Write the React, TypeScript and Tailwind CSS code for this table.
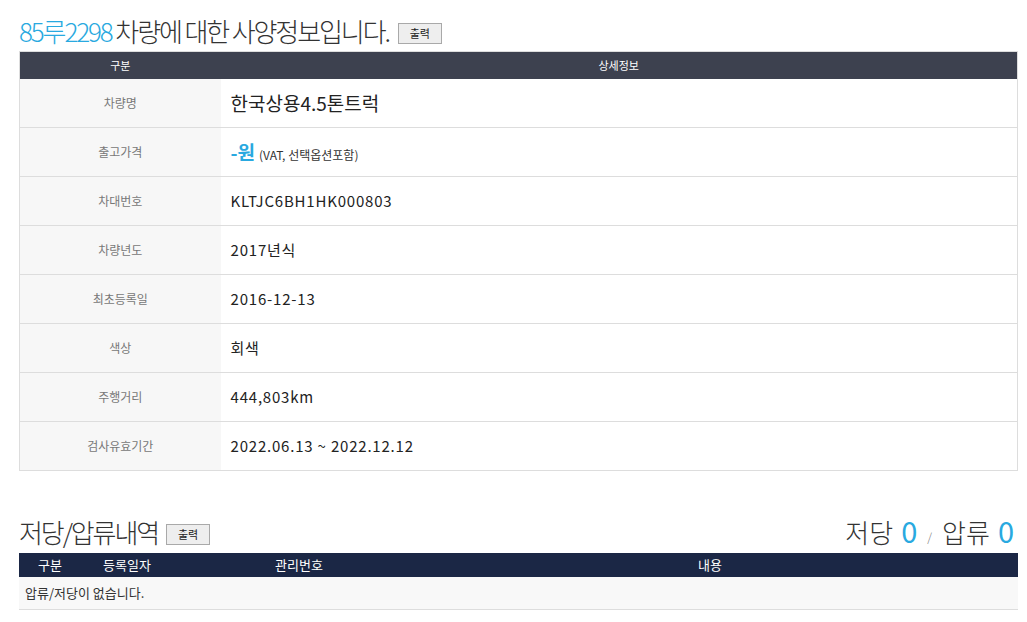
const rows: { label: string; value: React.ReactNode }[] = [
  {
    label: "차량명",
    value: <span className="text-[19px] tracking-normal text-[#222]">한국상용4.5톤트럭</span>,
  },
  {
    label: "출고가격",
    value: (
      <span className="flex items-baseline gap-1 tracking-normal">
        <span className="text-[19px] font-bold text-[#29a9e0]">-원</span>
        <span className="text-[12px] text-[#333]">(VAT, 선택옵션포함)</span>
      </span>
    ),
  },
  { label: "차대번호", value: "KLTJC6BH1HK000803" },
  { label: "차량년도", value: "2017년식" },
  { label: "최초등록일", value: "2016-12-13" },
  { label: "색상", value: "회색" },
  { label: "주행거리", value: "444,803km" },
  { label: "검사유효기간", value: "2022.06.13 ~ 2022.12.12" },
];

function PrintButton() {
  return (
    <button className="h-[21px] w-[44px] border border-[#a9a9a9] bg-[#eeeeee] text-[11px] text-[#222] leading-none">
      출력
    </button>
  );
}

export default function App() {
  return (
    <div
      className="w-[1027px] h-[622px] bg-white overflow-hidden"
      style={{ fontFamily: '"Noto Sans CJK KR", "Noto Sans", sans-serif' }}
    >
      {/* SPEC INFO */}
      <div className="ml-[19px] w-[999px]">
        <div className="flex items-end gap-[9px] h-[51px] pb-[7px]">
          <h2 className="text-[26px] font-light tracking-[-2.1px] leading-none text-[#333]">
            <span className="text-[#29a9e0]">85루2298</span> 차량에 대한 사양정보입니다.
          </h2>
          <PrintButton />
        </div>
        <table className="w-full border-collapse border border-[#dddddd]">
          <thead>
            <tr className="h-[27px] bg-[#3d414f] text-[11px] text-white">
              <th className="w-[201px] font-normal">구분</th>
              <th className="font-normal">상세정보</th>
            </tr>
          </thead>
          <tbody>
            {rows.map((row) => (
              <tr key={row.label} className="h-[49px] border-b border-[#dddddd]">
                <td className="bg-[#f7f7f7] text-center text-[12px] text-[#777]">
                  {row.label}
                </td>
                <td className="pl-[10px] text-[15px] tracking-[0.8px] text-[#222]">
                  {row.value}
                </td>
              </tr>
            ))}
          </tbody>
        </table>

        {/* MORTGAGE / SEIZURE */}
        <div className="mt-[37px] flex items-end justify-between h-[45px] pb-[8px]">
          <div className="flex items-end gap-[8px]">
            <h2 className="text-[26px] font-light tracking-[-2.1px] leading-none text-[#333]">
              저당/압류내역
            </h2>
            <PrintButton />
          </div>
          <div className="flex items-end text-[26px] font-light leading-none text-[#333] pr-[4px]">
            저당 <span className="ml-[8px] text-[29px] font-normal text-[#29a9e0]">0</span>
            <span className="mx-[10px] text-[12px] text-[#777] pb-[2px]">/</span>
            압류 <span className="ml-[8px] text-[29px] font-normal text-[#29a9e0]">0</span>
          </div>
        </div>
        <table className="w-full border-collapse">
          <thead>
            <tr className="h-[24px] bg-[#1b2745] text-[13px] text-white">
              <th className="w-[62px] font-normal">구분</th>
              <th className="w-[104px] font-normal text-left pl-[22px]">등록일자</th>
              <th className="w-[268px] font-normal text-left pl-[90px]">관리번호</th>
              <th className="font-normal text-left pl-[245px]">내용</th>
            </tr>
          </thead>
          <tbody>
            <tr className="h-[32px] bg-[#f8f8f8] border-b border-[#dddddd]">
              <td colSpan={4} className="pl-[6px] text-[13px] text-[#333]">
                압류/저당이 없습니다.
              </td>
            </tr>
          </tbody>
        </table>
      </div>
    </div>
  );
}
